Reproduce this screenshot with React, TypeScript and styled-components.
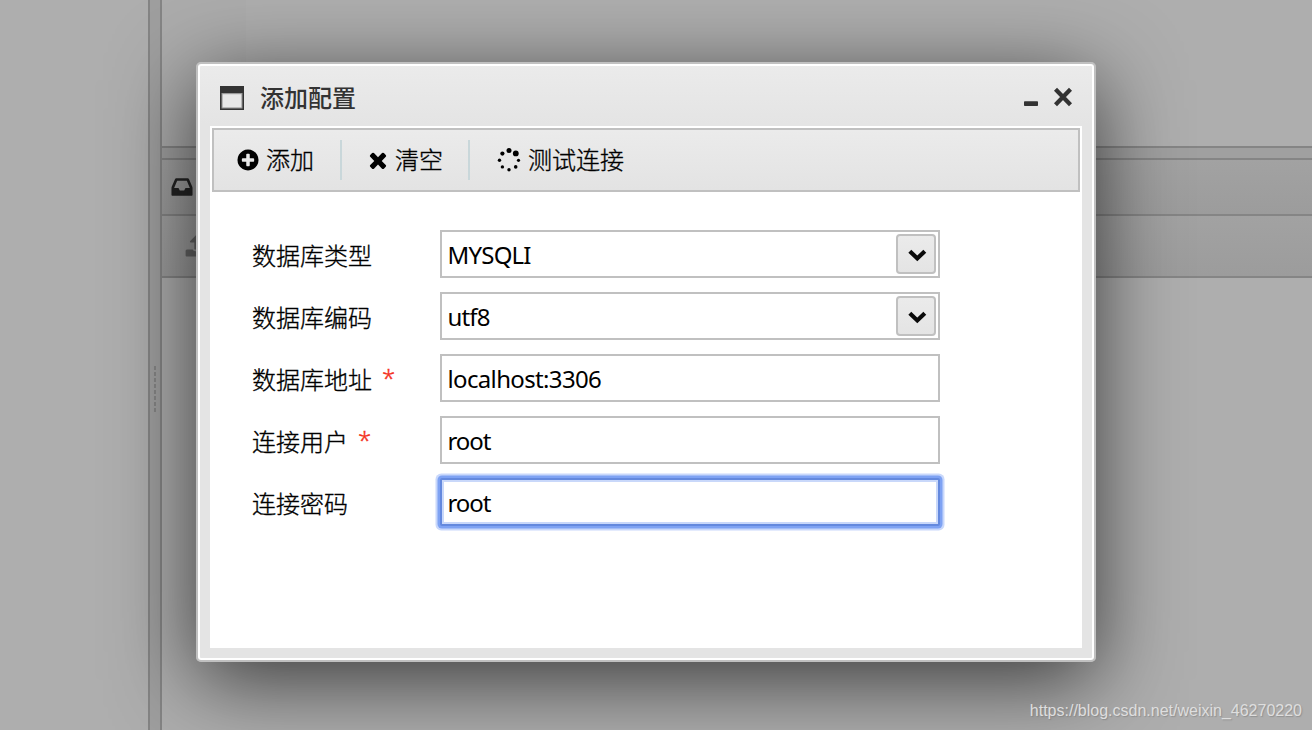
import React from "react";
import styled, { createGlobalStyle, css } from "styled-components";

const GlobalStyle = createGlobalStyle`
  * { box-sizing: border-box; }
  body { margin: 0; background: #aeaeae; overflow: hidden; }
  svg { display: block; flex: none; }
`;

const line = "#858585";
const edge = "#c0c0c0";

const Page = styled.div`
  position: relative;
  display: flex;
  width: 1312px;
  height: 730px;
  overflow: hidden;
  background: #aeaeae;
  color: #000;
  font-family: "Noto Sans", "Noto Sans CJK SC", sans-serif;
  font-size: 24px;
`;

const Sidebar = styled.div`
  width: 148px;
`;

const Splitter = styled.div`
  display: flex;
  align-items: center;
  justify-content: center;
  width: 14px;
  padding-top: 48px;
  background: #9f9f9f;
  border-left: 2px solid ${line};
  border-right: 2px solid ${line};
`;

const Grip = styled.div`
  width: 2px;
  height: 46px;
  background: repeating-linear-gradient(#858585 0 4px, #9f9f9f 4px 6px);
`;

const Workspace = styled.div`
  display: flex;
  flex: 1;
  flex-direction: column;
`;

const UpperPane = styled.div`
  display: flex;
  height: 148px;
  border-bottom: 2px solid ${line};
`;

const UpperColumn = styled.div`
  width: 84px;
  background: #acacac;
`;

const RowSplitter = styled.div`
  height: 12px;
  background: #a0a0a0;
  border-bottom: 2px solid ${line};
`;

const PaneBar = styled.div<{ $height: number; $indent: number }>`
  display: flex;
  align-items: center;
  height: ${(p) => p.$height}px;
  padding-left: ${(p) => p.$indent}px;
  background: linear-gradient(#a2a2a2, #9c9c9c);
  border-bottom: 2px solid ${line};
`;

const Dialog = styled.section`
  position: absolute;
  left: 196px;
  top: 62px;
  display: flex;
  flex-direction: column;
  width: 900px;
  height: 600px;
  padding: 2px 12px 12px;
  background: linear-gradient(#ebebeb, #e4e4e4 60px);
  background-origin: padding-box;
  border: 2px solid ${edge};
  border-radius: 5px;
  box-shadow: inset 0 0 0 2px #fff, 0 18px 84px rgba(0, 0, 0, 0.68);
`;

const TitleBar = styled.header`
  display: flex;
  align-items: center;
  height: 60px;
  padding: 4px 9px 0 10px;
`;

const Title = styled.h1`
  flex: 1;
  margin: 0 0 1px 16px;
  color: #333;
  font-size: 24px;
  font-weight: 500;
  line-height: 36px;
`;

const WindowButtons = styled.div`
  display: flex;
  align-items: center;
  gap: 14px;
`;

const Content = styled.div`
  flex: 1;
  padding: 2px;
  background: #fff;
`;

const Toolbar = styled.div`
  display: flex;
  align-items: center;
  height: 64px;
  background: linear-gradient(#ebebeb, #e3e3e3);
  border: 2px solid ${edge};
`;

const Tool = styled.div<{ $left: number; $right: number; $gap: number }>`
  display: flex;
  align-items: center;
  gap: ${(p) => p.$gap}px;
  height: 40px;
  padding: 0 ${(p) => p.$right}px 0 ${(p) => p.$left}px;
  line-height: 40px;
  white-space: nowrap;

  & + & {
    border-left: 2px solid #c9d7da;
  }
`;

const lightText = css`
  font-weight: 300;
  -webkit-text-stroke: 0.35px currentColor;
`;

const ToolText = styled.span`
  ${lightText}
  padding-bottom: 1px;
`;

const Form = styled.form`
  display: flex;
  flex-direction: column;
  gap: 14px;
  padding: 38px 0 0 40px;
`;

const Row = styled.label`
  display: flex;
  height: 48px;
  line-height: 48px;
`;

const Label = styled.span`
  ${lightText}
  display: flex;
  width: 188px;
  padding-top: 1.5px;
  white-space: nowrap;
`;

const Required = styled.span`
  margin: -2px 0 0 10px;
  color: #f4321e;
`;

const Field = styled.div<{ $focused?: boolean }>`
  display: flex;
  align-items: center;
  justify-content: space-between;
  width: 500px;
  height: 48px;
  padding: 0 2px 0 5.5px;
  background: #fff;
  border: 2px solid ${edge};
  ${(p) =>
    p.$focused &&
    css`
      border-color: #6489de;
      border-radius: 2px;
      box-shadow: inset 0 0 0 2px #c9d8fa, 0 0 0 2.5px #7ea2f3, 0 0 0 4.5px #c9d8fb;
    `}
`;

const Value = styled.span<{ $tracking: number }>`
  padding-top: 2px;
  letter-spacing: ${(p) => p.$tracking}px;
`;

const SelectButton = styled.span`
  display: flex;
  align-items: center;
  justify-content: center;
  width: 40px;
  height: 40px;
  padding: 2px 0 0 1px;
  background: linear-gradient(#ebebeb, #e4e4e4);
  border: 2px solid ${edge};
  border-radius: 4px;
`;

const Watermark = styled.div`
  position: absolute;
  right: 10px;
  bottom: 9px;
  color: #dedede;
  font: 16px/20px "Liberation Sans", Arial, sans-serif;
  text-shadow: 1px 1px 1px rgba(110, 110, 110, 0.45);
`;

const glyphs = {
  plus: "M1344 960v-128q0-26-19-45t-45-19h-256v-256q0-26-19-45t-45-19h-128q-26 0-45 19t-19 45v256h-256q-26 0-45 19t-19 45v128q0 26 19 45t45 19h256v256q0 26 19 45t45 19h128q26 0 45-19t19-45v-256h256q26 0 45-19t19-45zm320-64q0 209-103 385.5t-279.5 279.5-385.5 103-385.5-103-279.5-279.5-103-385.5 103-385.5 279.5-279.5 385.5-103 385.5 103 279.5 279.5 103 385.5z",
  times: "M1490 1322q0 40-28 68l-136 136q-28 28-68 28t-68-28l-294-294-294 294q-28 28-68 28t-68-28l-136-136q-28-28-28-68t28-68l294-294-294-294q-28-28-28-68t28-68l136-136q28-28 68-28t68 28l294 294 294-294q28-28 68-28t68 28l136 136q28 28 28 68t-28 68l-294 294 294 294q28 28 28 68z",
  inbox: "M1151 960h316q-1-3-2.5-8.5t-2.5-7.5l-212-496h-708l-212 496q-1 3-2.5 8.5t-2.5 7.5h316l95 192h320zm513 30v482q0 26-19 45t-45 19h-1408q-26 0-45-19t-19-45v-482q0-62 25-123l238-552q10-25 36.5-42t52.5-17h832q26 0 52.5 17t36.5 42l238 552q25 61 25 123z",
  upload: "M1728 1248v320q0 40-28 68t-68 28h-1472q-40 0-68-28t-28-68v-320q0-40 28-68t68-28h427q21 56 70.5 92t110.5 36h256q61 0 110.5-36t70.5-92h427q40 0 68 28t28 68zm-325-648q-17 40-59 40h-256v448q0 26-19 45t-45 19h-256q-26 0-45-19t-19-45v-448h-256q-42 0-59-40-17-39 14-69l448-448q18-19 45-19t45 19l448 448q31 30 14 69z",
};

function Glyph({ name, color = "#000" }: { name: keyof typeof glyphs; color?: string }) {
  return (
    <svg width="24" height="24" viewBox="20 20 1752 1752" fill={color}>
      <path d={glyphs[name]} />
    </svg>
  );
}

function SpinnerIcon() {
  return (
    <svg width="24" height="24" viewBox="0 0 24 24">
      <circle cx="12" cy="2.6" r="2.5" />
      <circle cx="18.8" cy="5.4" r="2.9" />
      <circle cx="5.4" cy="5.6" r="2.1" />
      <circle cx="2.5" cy="12.3" r="1.7" />
      <circle cx="21.5" cy="12.3" r="1.6" />
      <circle cx="5.4" cy="18.9" r="1.7" />
      <circle cx="18.7" cy="18.9" r="1.8" />
      <circle cx="12" cy="21.8" r="1.7" />
    </svg>
  );
}

function WindowIcon() {
  return (
    <svg width="24" height="24" viewBox="0 0 24 24">
      <path d="M0 0h24v24H0z" fill="#333" />
      <path d="M1.5 7h21v15.5h-21z" fill="#999" />
      <path d="M2.6 8.2h18.8v13.2H2.6z" fill="#e7e7e7" />
    </svg>
  );
}

function Chevron() {
  return (
    <svg width="20" height="14" viewBox="0 0 20 14">
      <path d="M2.8 3.2 10.3 10.4 17.8 3.2" fill="none" stroke="#0a0a0a" strokeWidth="4.2" />
    </svg>
  );
}

const fields = [
  { label: "数据库类型", value: "MYSQLI", select: true, tracking: -0.8 },
  { label: "数据库编码", value: "utf8", select: true, tracking: -0.85 },
  { label: "数据库地址", value: "localhost:3306", required: true, tracking: -0.65 },
  { label: "连接用户", value: "root", required: true, tracking: -1.1 },
  { label: "连接密码", value: "root", focused: true, tracking: -1.1 },
];

export default function App() {
  return (
    <Page>
      <GlobalStyle />
      <Sidebar />
      <Splitter>
        <Grip />
      </Splitter>
      <Workspace>
        <UpperPane>
          <UpperColumn />
        </UpperPane>
        <RowSplitter />
        <PaneBar $height={56} $indent={8}>
          <Glyph name="inbox" color="#242424" />
        </PaneBar>
        <PaneBar $height={62} $indent={23}>
          <Glyph name="upload" color="#666" />
        </PaneBar>
      </Workspace>

      <Dialog>
        <TitleBar>
          <WindowIcon />
          <Title>添加配置</Title>
          <WindowButtons>
            <svg width="16" height="22" viewBox="0 0 16 22">
              <rect x="1" y="14.2" width="14" height="4.8" rx="0.8" fill="#333" />
            </svg>
            <svg width="20" height="22" viewBox="0 0 20 22">
              <path d="M2.5 2.2 17.5 17.8M17.5 2.2 2.5 17.8" stroke="#333" strokeWidth="4.2" />
            </svg>
          </WindowButtons>
        </TitleBar>
        <Content>
          <Toolbar>
            <Tool $left={22} $right={26} $gap={6}>
              <Glyph name="plus" />
              <ToolText>添加</ToolText>
            </Tool>
            <Tool $left={23.5} $right={25} $gap={5.5}>
              <Glyph name="times" />
              <ToolText>清空</ToolText>
            </Tool>
            <Tool $left={26.5} $right={0} $gap={7.5}>
              <SpinnerIcon />
              <ToolText>测试连接</ToolText>
            </Tool>
          </Toolbar>
          <Form>
            {fields.map((f) => (
              <Row key={f.label}>
                <Label>
                  {f.label}
                  {f.required && <Required>*</Required>}
                </Label>
                <Field $focused={f.focused}>
                  <Value $tracking={f.tracking}>{f.value}</Value>
                  {f.select && (
                    <SelectButton>
                      <Chevron />
                    </SelectButton>
                  )}
                </Field>
              </Row>
            ))}
          </Form>
        </Content>
      </Dialog>
      <Watermark>https://blog.csdn.net/weixin_46270220</Watermark>
    </Page>
  );
}
